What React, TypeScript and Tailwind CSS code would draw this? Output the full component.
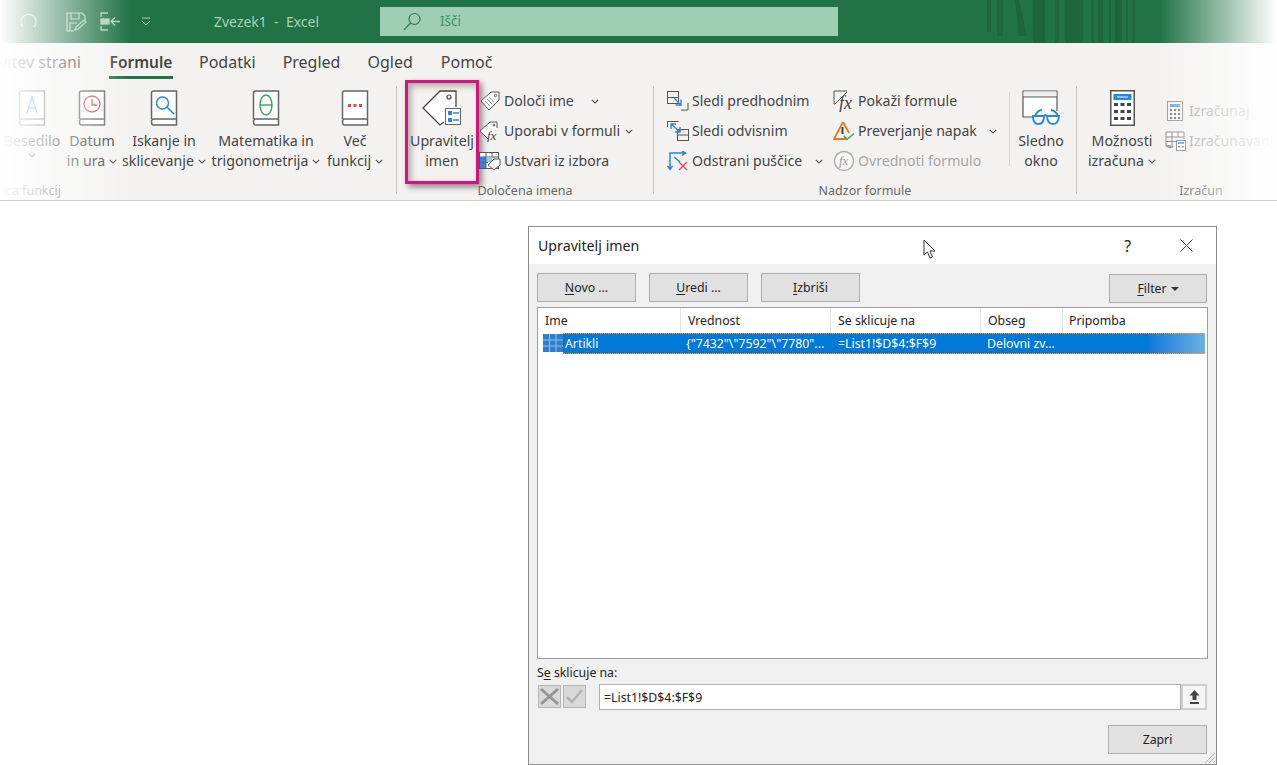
import type { ReactNode } from 'react';

const font = { ui: "font-['Noto_Sans','Open_Sans',sans-serif]" };

const Chevron = ({ className = '' }: { className?: string }) => (
    <svg width="8" height="5" viewBox="0 0 8 5" fill="none" stroke="#555" strokeWidth="1.2" className={className}>
        <path d="M.8.8 4 4 7.2.8" />
    </svg>
);

const Book = ({ children }: { children: ReactNode }) => (
    <svg width="28" height="36" viewBox="0 0 28 36" fill="none">
        <path d="M1.5 29V3q0-2 2-2h23v34H3.500q-2 0-2-3t2-3h23" fill="#fff" stroke="#666" strokeWidth="1.500" />
        {children}
    </svg>
);

const TagManager = () => (
    <svg width="40" height="36" viewBox="0 0 40 36" fill="none">
        <path d="M22 32 18 35 1 18 18 1h16v16" stroke="#444" strokeWidth="1.300" fill="#fff" />
        <circle cx="27" cy="7" r="2" stroke="#444" strokeWidth="1.200" />
        <rect x="23.500" y="18.500" width="15" height="16" fill="#fff" stroke="#666" />
        <rect x="26" y="21" width="4" height="4" fill="#2b88d8" />
        <rect x="26" y="28" width="4" height="4" fill="#2b88d8" />
        <path d="M31 23h6M31 30h6" stroke="#2b88d8" strokeWidth="1.300" />
    </svg>
);

const TagSmall = () => (
    <svg width="22" height="20" viewBox="0 0 22 20" fill="none" stroke="#555">
        <path d="M2 10 12 1h8v8L10 19z" fill="#fff" />
        <path d="M6 10l5 5M8 8l5 5M10 6l5 5" stroke="#999" />
        <circle cx="16.500" cy="4.500" r="1.200" />
    </svg>
);

const TagFx = () => (
    <svg width="22" height="22" viewBox="0 0 22 22" fill="none">
        <path d="M9 19 1 11 11 2h7v6" stroke="#555" fill="#fff" />
        <circle cx="15" cy="5" r="1" stroke="#555" />
        <text x="8" y="20" fontFamily="Liberation Serif" fontStyle="italic" fontSize="13" fill="#444">fx</text>
    </svg>
);

const TableTag = () => (
    <svg width="22" height="20" viewBox="0 0 22 20" fill="none">
        <rect x=".5" y="1.500" width="19" height="16" fill="#fff" stroke="#555" />
        <path d="M1 6h18" stroke="#555" />
        <rect x="1" y="6" width="6" height="11" fill="#2b88d8" />
        <rect x="7" y="6" width="6" height="5" fill="#9cc9ee" />
        <path d="M7 2v15M13 2v4M1 11.500h8" stroke="#666" />
        <path d="M9 14 15 8h6v6l-6 5z" fill="#fff" stroke="#555" />
    </svg>
);

const TracePrecedents = () => (
    <svg width="22" height="20" viewBox="0 0 22 20" fill="none">
        <rect x=".5" y=".5" width="11" height="12" stroke="#555" />
        <path d="M1 6.500h10M14 19h7v-7" stroke="#555" />
        <path d="M7 7l7 7M8.500 14H14V8.500" stroke="#2b88d8" strokeWidth="1.400" />
    </svg>
);

const TraceDependents = () => (
    <svg width="22" height="20" viewBox="0 0 22 20" fill="none">
        <path d="M7 .5H.5V6" stroke="#555" />
        <path d="M.5.500h11" stroke="#555" />
        <rect x="10.500" y="8.500" width="11" height="11" stroke="#555" />
        <path d="M11 14h10" stroke="#555" />
        <path d="M4 3l9 8M4 8V3h5M8 11h5V6" stroke="#2b88d8" strokeWidth="1.400" />
    </svg>
);

const RemoveArrows = () => (
    <svg width="22" height="20" viewBox="0 0 22 20" fill="none">
        <path d="M3 18V2h15M.5 15 3 18.500 5.500 15M15 0l3.500 2L15 4.500M7 6l6 5" stroke="#2b88d8" strokeWidth="1.500" />
        <path d="M12 11l8 8M20 11l-8 8" stroke="#e8434b" strokeWidth="1.300" />
    </svg>
);

const ShowFormulas = () => (
    <svg width="22" height="22" viewBox="0 0 22 22" fill="none">
        <path d="M14 1H1v13h1L14 2" stroke="#555" />
        <text x="6" y="19" fontFamily="Liberation Serif" fontStyle="italic" fontSize="18" fill="#444">fx</text>
    </svg>
);

const ErrorCheck = () => (
    <svg width="22" height="20" viewBox="0 0 22 20" fill="none">
        <path d="M10 1 1 18h12" stroke="#e07b24" strokeWidth="1.800" />
        <path d="M10 1l6 11" stroke="#e07b24" strokeWidth="1.800" />
        <path d="M9.500 6v7" stroke="#444" strokeWidth="2" />
        <path d="M11 15l3 3.500 7-6" stroke="#3aa655" strokeWidth="1.500" />
    </svg>
);

const EvalFormula = () => (
    <svg width="22" height="22" viewBox="0 0 22 22" fill="none">
        <circle cx="11" cy="11" r="9.500" stroke="#aaa" strokeWidth="1.400" fill="#f7f7f7" />
        <text x="6" y="15" fontFamily="Liberation Serif" fontStyle="italic" fontSize="13" fill="#999">fx</text>
    </svg>
);

const WatchWindow = () => (
    <svg width="38" height="36" viewBox="0 0 38 36" fill="none">
        <path d="M11 27H1V1h34v20" fill="#fff" stroke="#555" strokeWidth="1.200" />
        <rect x="1.500" y="1.500" width="33" height="5" fill="#eee" />
        <path d="M1 7h34" stroke="#555" strokeWidth="1.200" />
        <path d="M13 26q3-6 7-6M36 26q-2-5-7-6" stroke="#2b88d8" strokeWidth="1.800" />
        <path d="M11 26h11q0 8-5.500 8T11 26zM25 26h12q-.500 8-6 8t-6-8zM22 26q1.500-1.500 3 0" stroke="#2b88d8" strokeWidth="1.900" fill="#fff" />
    </svg>
);

const Calculator = ({ size = 'big' }: { size?: 'big' | 'small' }) =>
    size === 'big' ? (
        <svg width="25" height="36" viewBox="0 0 25 36" fill="none">
            <rect x=".75" y=".75" width="23.500" height="34.500" fill="#fff" stroke="#555" strokeWidth="1.500" />
            <rect x="3.500" y="4" width="18" height="6" fill="#2b88d8" />
            <rect x="7" y="6" width="11" height="2" fill="#8cc2ee" />
            <path d="M4 13h4v3H4zM10.500 13h4v3h-4zM17 13h4v3h-4zM4 20h4v3H4zM10.500 20h4v3h-4zM17 20h4v3h-4zM4 27h4v3H4zM10.500 27h4v3h-4zM17 27h4v3h-4z" fill="#444" />
        </svg>
    ) : (
        <svg width="16" height="20" viewBox="0 0 16 20" fill="none">
            <rect x=".5" y=".5" width="15" height="19" fill="#f4f4f4" stroke="#999" />
            <rect x="3" y="3" width="10" height="3" fill="#6aaee6" />
            <path d="M3 8h2v2H3zM7 8h2v2H7zM11 8h2v2h-2zM3 12h2v2H3zM7 12h2v2H7zM11 12h2v2h-2zM3 16h2v2H3zM7 16h2v2H7zM11 16h2v2h-2z" fill="#777" />
        </svg>
    );

const CalcSheet = () => (
    <svg width="21" height="20" viewBox="0 0 21 20" fill="none">
        <path d="M1 1h18v5H1zM1 6v9h3l2 1M7 6v8M13 1v5M7 1v5M1 10.500h11M19 6v2" stroke="#888" fill="#fbfbfb" />
        <path d="M1 15q3 3 7 1v-1z" stroke="#888" />
        <rect x="11.500" y="9.500" width="9" height="10" fill="#fff" stroke="#888" />
        <rect x="13" y="11" width="6" height="2" fill="#6aaee6" />
        <path d="M13 15h2v1.500h-2zM17 15h2v1.500h-2z" fill="#888" />
    </svg>
);

const SaveEdit = () => (
    <svg width="21" height="20" viewBox="0 0 21 20" fill="none" stroke="#a6d2b7" strokeWidth="1.200">
        <path d="M8 19H1V1h15l3 3v4" />
        <path d="M5 1v6h8V1M4 19v-8h7" />
        <path d="M9 18l1-3 8-7 2 2-8 7z" />
    </svg>
);

const QatPreview = () => (
    <svg width="21" height="19" viewBox="0 0 21 19" fill="none" stroke="#a6d2b7" strokeWidth="1.300">
        <path d="M8 1H1v4M1 14v4h7" />
        <rect x="1" y="7" width="8" height="5" fill="#a6d2b7" />
        <path d="M20 9.500H11M15 5.500l-4 4 4 4" />
    </svg>
);

const RibbonText = ({ lines, chevron }: { lines: string[]; chevron?: boolean }) => (
    <div className="flex flex-col items-center whitespace-nowrap text-[14.200px] leading-[19.500px] text-[#444]">
        <span>{lines[0]}</span>
        <span className="flex items-center gap-[4px]">
            {lines[1]}
            {chevron && <Chevron className="mt-[2px]" />}
        </span>
    </div>
);

const BigCol = ({ w, icon, lines, chevron = true }: { w: string; icon: ReactNode; lines: string[]; chevron?: boolean }) => (
    <div className={`flex flex-col items-center pt-[10px] ${w}`}>
        <div className="flex h-[36px] items-center">{icon}</div>
        <div className="h-[5px]" />
        <RibbonText lines={lines} chevron={chevron} />
    </div>
);

const SmallRow = ({
    icon,
    label,
    chevron,
    muted,
    iconW = 'w-[25px]',
}: {
    icon: ReactNode;
    label: string;
    chevron?: string;
    muted?: boolean;
    iconW?: string;
}) => (
    <div className={`flex h-[30px] items-center whitespace-nowrap text-[14.100px] ${muted ? 'text-[#a6a6a6]' : 'text-[#444]'}`}>
        <div className={`flex shrink-0 items-center ${iconW}`}>{icon}</div>
        <span>{label}</span>
        {chevron && <Chevron className={chevron} />}
    </div>
);

const GroupLabel = ({ children }: { children: ReactNode }) => (
    <div className="h-[16px] text-center text-[12.500px] leading-[14px] text-[#666]">{children}</div>
);

const Sep = () => <div className="my-[6px] h-[108px] w-px shrink-0 bg-[#c6c6c6]" />;

const DlgButton = ({ w = 'w-[99px]', children }: { w?: string; children: ReactNode }) => (
    <div className={`flex h-[29px] shrink-0 items-center justify-center border border-[#adadad] bg-[#e1e1e1] pt-[2px] text-[12.300px] text-[#222] ${w}`}>
        {children}
    </div>
);

const Key = ({ children }: { children: ReactNode }) => <span className="underline underline-offset-2">{children}</span>;

const headers = [
    { label: 'Ime', w: 'w-[143px]' },
    { label: 'Vrednost', w: 'w-[150px]' },
    { label: 'Se sklicuje na', w: 'w-[150px]' },
    { label: 'Obseg', w: 'w-[82px]' },
];

const App = () => {
    return (
        <div className={`relative h-[765px] w-[1277px] overflow-hidden bg-white ${font.ui}`}>
            {/* title bar */}
            <div className="relative flex h-[43px] items-center bg-[#217346]">
                <div className="ml-[20px] flex items-center">
                    <svg width="17" height="17" viewBox="0 0 17 17" fill="none" stroke="#a6d2b7" strokeWidth="1.300">
                        <path d="M3 14A7.500 7.500 0 1 1 14 14" />
                    </svg>
                    <Chevron className="ml-[9px]" />
                    <div className="ml-[12px]">
                        <SaveEdit />
                    </div>
                    <div className="ml-[13px]">
                        <QatPreview />
                    </div>
                    <svg width="10" height="9" viewBox="0 0 10 9" fill="none" stroke="#a6d2b7" className="ml-[20px]">
                        <path d="M1 1h8M1 4l4 4 4-4" />
                    </svg>
                </div>
                <div className="ml-[63px] w-[166px] whitespace-pre text-[14px] text-[#a6d2b7]">Zvezek1  -  Excel</div>
                <div className="flex h-[29px] w-[458px] items-center bg-[#9fcfb3] pl-[23px]">
                    <svg width="19" height="19" viewBox="0 0 19 19" fill="none" stroke="#2f7f52" strokeWidth="1.200">
                        <circle cx="11.500" cy="7" r="5.500" />
                        <path d="M7.500 11 1 18" />
                    </svg>
                    <span className="ml-[18px] text-[13.500px] text-[#3f8f62]">Išči</span>
                </div>
                <svg width="170" height="43" viewBox="0 0 170 43" className="absolute left-[985px] top-0">
                    <path d="M2 0h4v32H2zM12 0h6v36h-6zM30 0h4l8 36h-8zM48 0h12v43H48zM70 0h4v43h-4zM80 0h18v43H80zM106 0h3v43h-3zM113 0h5v43h-5zM124 0h2v43h-2zM130 0h7v43h-7zM141 0h2v43h-2zM147 0h3v43h-3z" fill="#1c6038" opacity=".75" />
                </svg>
            </div>

            {/* tabs */}
            <div className="flex h-[37px] items-start bg-[#f3f2f1] pt-[1px] text-[16px] text-[#444]">
                <div className="flex h-[36px] w-[81px] items-center justify-end overflow-hidden whitespace-nowrap">Postavitev strani</div>
                <div className="ml-[28px] flex h-[35px] w-[64px] items-center justify-center whitespace-nowrap border-b-[3px] border-[#217346] pt-[5px] text-[15.500px] font-semibold">
                    Formule
                </div>
                <div className="ml-[26px] flex h-[36px] items-center">Podatki</div>
                <div className="ml-[27px] flex h-[36px] items-center">Pregled</div>
                <div className="ml-[27px] flex h-[36px] items-center">Ogled</div>
                <div className="ml-[28px] flex h-[36px] items-center">Pomoč</div>
            </div>

            {/* ribbon */}
            <div className="flex h-[121px] border-b border-[#d0d0d0] bg-[#f3f2f1]">
                <div className="flex w-[396px] shrink-0 flex-col">
                    <div className="flex h-[104px]">
                        <BigCol
                            w="w-[64px]"
                            icon={
                                <Book>
                                    <path d="M9 23 14 7l5 16M10.500 18h7" stroke="#2b88d8" strokeWidth="1.300" />
                                </Book>
                            }
                            lines={['Besedilo', '']}
                        />
                        <BigCol
                            w="w-[56px]"
                            icon={
                                <Book>
                                    <circle cx="14" cy="14" r="8" stroke="#e8434b" strokeWidth="1.300" />
                                    <path d="M14 9v6h5" stroke="#e8434b" strokeWidth="1.300" />
                                </Book>
                            }
                            lines={['Datum', 'in ura']}
                        />
                        <BigCol
                            w="w-[88px]"
                            icon={
                                <Book>
                                    <circle cx="12.500" cy="13" r="6" stroke="#2b88d8" strokeWidth="1.500" />
                                    <path d="m17 17 7 7" stroke="#2b88d8" strokeWidth="1.500" />
                                </Book>
                            }
                            lines={['Iskanje in', 'sklicevanje']}
                        />
                        <BigCol
                            w="w-[116px]"
                            icon={
                                <Book>
                                    <ellipse cx="14" cy="15" rx="6" ry="10" stroke="#3aa655" strokeWidth="1.400" />
                                    <path d="M8 15h12" stroke="#3aa655" strokeWidth="1.400" />
                                </Book>
                            }
                            lines={['Matematika in', 'trigonometrija']}
                        />
                        <BigCol
                            w="w-[62px]"
                            icon={
                                <Book>
                                    <path d="M7 14h3v3H7zM12.500 14h3v3h-3zM18 14h3v3h-3z" fill="#e8434b" />
                                </Book>
                            }
                            lines={['Več', 'funkcij']}
                        />
                    </div>
                    <div className="flex h-[16px] w-[61px] justify-end overflow-hidden whitespace-nowrap text-[12.500px] leading-[14px] text-[#666]">
                        Knjižnica funkcij
                    </div>
                </div>
                <Sep />

                {/* Določena imena */}
                <div className="flex w-[256px] shrink-0 flex-col">
                    <div className="flex h-[104px]">
                        <div className="ml-[8px] flex h-[104px] w-[74px] shrink-0 flex-col items-center border-[3px] border-[#d6127f] pt-[7px] shadow-[3px_3px_6px_rgba(0,0,0,0.45),inset_3px_3px_6px_rgba(0,0,0,0.3)]">
                            <TagManager />
                            <div className="h-[5px]" />
                            <RibbonText lines={['Upravitelj', 'imen']} />
                        </div>
                        <div className="flex flex-col pt-[6px]">
                            <SmallRow icon={<TagSmall />} label="Določi ime" chevron="ml-[17px]" />
                            <SmallRow icon={<TagFx />} label="Uporabi v formuli" chevron="ml-[5px]" />
                            <SmallRow icon={<TableTag />} label="Ustvari iz izbora" />
                        </div>
                    </div>
                    <GroupLabel>Določena imena</GroupLabel>
                </div>
                <Sep />

                {/* Nadzor formule */}
                <div className="flex w-[422px] shrink-0 flex-col">
                    <div className="flex h-[104px] pl-[13px]">
                        <div className="flex w-[166px] shrink-0 flex-col pt-[6px]">
                            <SmallRow icon={<TracePrecedents />} label="Sledi predhodnim" />
                            <SmallRow icon={<TraceDependents />} label="Sledi odvisnim" />
                            <SmallRow icon={<RemoveArrows />} label="Odstrani puščice" chevron="ml-[13px]" />
                        </div>
                        <div className="flex w-[176px] shrink-0 flex-col pt-[6px]">
                            <SmallRow icon={<ShowFormulas />} label="Pokaži formule" />
                            <SmallRow icon={<ErrorCheck />} label="Preverjanje napak" chevron="ml-[12px]" />
                            <SmallRow icon={<EvalFormula />} label="Ovrednoti formulo" muted />
                        </div>
                        <div className="mt-[12px] h-[74px] w-px shrink-0 bg-[#d4d4d4]" />
                        <BigCol w="w-[62px]" icon={<WatchWindow />} lines={['Sledno', 'okno']} chevron={false} />
                    </div>
                    <GroupLabel>Nadzor formule</GroupLabel>
                </div>
                <Sep />

                {/* Izračun */}
                <div className="flex w-[200px] shrink-0 flex-col">
                    <div className="flex h-[104px]">
                        <div className="ml-[2px]">
                            <BigCol w="w-[86px]" icon={<Calculator />} lines={['Možnosti', 'izračuna']} />
                        </div>
                        <div className="flex flex-col pt-[16px]">
                            <SmallRow icon={<Calculator size="small" />} label="Izračunaj" muted iconW="w-[24px] pl-[2px]" />
                            <SmallRow icon={<CalcSheet />} label="Izračunavanje" muted iconW="w-[24px]" />
                        </div>
                    </div>
                    <div className="pl-[48px]">
                        <GroupLabel>Izračun</GroupLabel>
                    </div>
                </div>
            </div>

            {/* edge fades */}
            <div className="absolute left-0 top-0 h-[200px] w-[130px] bg-linear-to-r from-white to-white/0" />
            <div className="absolute right-0 top-0 h-[200px] w-[117px] bg-linear-to-l from-white to-white/0" />

            {/* dialog */}
            <div className="relative ml-[528px] mt-[25px] flex h-[539px] w-[689px] flex-col border border-[#8c8c8c] bg-white">
                <div className="flex h-[37px] shrink-0 items-center pl-[9px] text-[14.200px] text-[#222]">
                    <span>Upravitelj imen</span>
                    <span className="ml-[485px] text-[16px]">?</span>
                    <svg width="13" height="13" viewBox="0 0 13 13" stroke="#444" className="ml-[49px]">
                        <path d="m.5.500 12 12M12.500.500l-12 12" />
                    </svg>
                </div>
                <div className="flex flex-1 flex-col bg-[#f0f0f0] px-[8px] pt-[9px]">
                    <div className="flex">
                        <DlgButton>
                            <span>
                                <Key>N</Key>ovo ...
                            </span>
                        </DlgButton>
                        <div className="ml-[13px]">
                            <DlgButton>
                                <span>
                                    <Key>U</Key>redi ...
                                </span>
                            </DlgButton>
                        </div>
                        <div className="ml-[13px]">
                            <DlgButton>
                                <span>
                                    <Key>I</Key>zbriši
                                </span>
                            </DlgButton>
                        </div>
                        <div className="ml-auto mr-[1px] mt-[1px]">
                            <DlgButton w="w-[98px]">
                                <span className="-mt-px flex items-center gap-[4px]">
                                    <span>
                                        <Key>F</Key>ilter
                                    </span>
                                    <span className="h-0 w-0 border-x-[4px] border-t-[4px] border-x-transparent border-t-[#333]" />
                                </span>
                            </DlgButton>
                        </div>
                    </div>

                    <div className="mt-[4px] h-[352px] w-[671px] border border-[#9a9ea8] bg-white">
                        <div className="flex h-[25px] text-[12.300px] text-[#222]">
                            {headers.map((h) => (
                                <div key={h.label} className={`flex items-center border-r border-[#e5e5e5] pl-[7px] pt-[2px] ${h.w}`}>
                                    {h.label}
                                </div>
                            ))}
                            <div className="flex items-center pl-[6px] pt-[2px]">Pripomba</div>
                        </div>
                        <div className="flex h-[21px] pl-[5px] text-[12.300px] text-white">
                            <svg width="20" height="18" viewBox="0 0 20 18" className="mt-[1px] shrink-0">
                                <rect width="20" height="18" fill="#2f80cc" />
                                <path d="M0 6h20M0 12h20M6.500 0v18M13 0v18" stroke="#8fbde6" />
                            </svg>
                            <div className="flex h-[21px] w-[642px] items-center border-y border-dotted border-[#cfa76d] bg-linear-to-r from-[#0078d7] from-[91%] to-[#6aaee6] pt-[2px]">
                                <div className="w-[123px] pl-[2px]">Artikli</div>
                                <div className="w-[150px] whitespace-nowrap">{'{"7432"\\"7592"\\"7780"...'}</div>
                                <div className="w-[150px] pl-[2px]">=List1!$D$4:$F$9</div>
                                <div className="pl-[1px]">Delovni zv...</div>
                            </div>
                        </div>
                    </div>

                    <div className="mt-[5px] h-[20px] text-[12.300px] leading-[18px] text-[#222]">
                        S<Key>e</Key> sklicuje na:
                    </div>
                    <div className="flex h-[26px]">
                        <div className="ml-[1px] mt-[1px] flex h-[23px] w-[23px] items-center justify-center border border-[#b5b5b5] bg-[#d9d9d9]">
                            <svg width="19" height="19" viewBox="0 0 19 19" stroke="#959595" strokeWidth="3">
                                <path d="m1 2 17 15M18 2 1 17" />
                            </svg>
                        </div>
                        <div className="ml-[2px] mt-[1px] flex h-[23px] w-[23px] items-center justify-center border border-[#b5b5b5] bg-[#d9d9d9]">
                            <svg width="17" height="15" viewBox="0 0 17 15" stroke="#b3b3b3" strokeWidth="2.500" fill="none">
                                <path d="m1 8 5 5L16 1" />
                            </svg>
                        </div>
                        <div className="ml-[13px] flex h-[26px] w-[582px] items-center border border-[#b0b0b0] bg-white pl-[4px] pt-[2px] text-[12.300px] text-[#222]">
                            =List1!$D$4:$F$9
                        </div>
                        <div className="flex h-[26px] w-[26px] items-center justify-center border-2 border-[#cfcfcf] bg-[#f6f6f6]">
                            <svg width="11" height="14" viewBox="0 0 11 14" fill="#444">
                                <path d="M5.500 0 10.500 5.500H7.500V10h-4V5.500H.5zM1 12h9v2H1z" />
                            </svg>
                        </div>
                    </div>
                    <div className="mr-[1px] mt-[15px] flex justify-end">
                        <DlgButton>Zapri</DlgButton>
                    </div>
                </div>

                {/* resize grip and mouse pointer */}
                <svg width="12" height="12" viewBox="0 0 12 12" stroke="#b5b5b5" className="absolute bottom-0 right-0">
                    <path d="M11 1 1 11M11 5l-6 6M11 9l-2 2" />
                </svg>
                <svg width="14" height="21" viewBox="0 0 14 21" fill="#fff" stroke="#333" className="absolute left-[394px] top-[12px]">
                    <path d="M1 1v15l3.500-3 2.500 6 2.500-1-2.500-6H12z" />
                </svg>
            </div>
        </div>
    );
};

export default App;
